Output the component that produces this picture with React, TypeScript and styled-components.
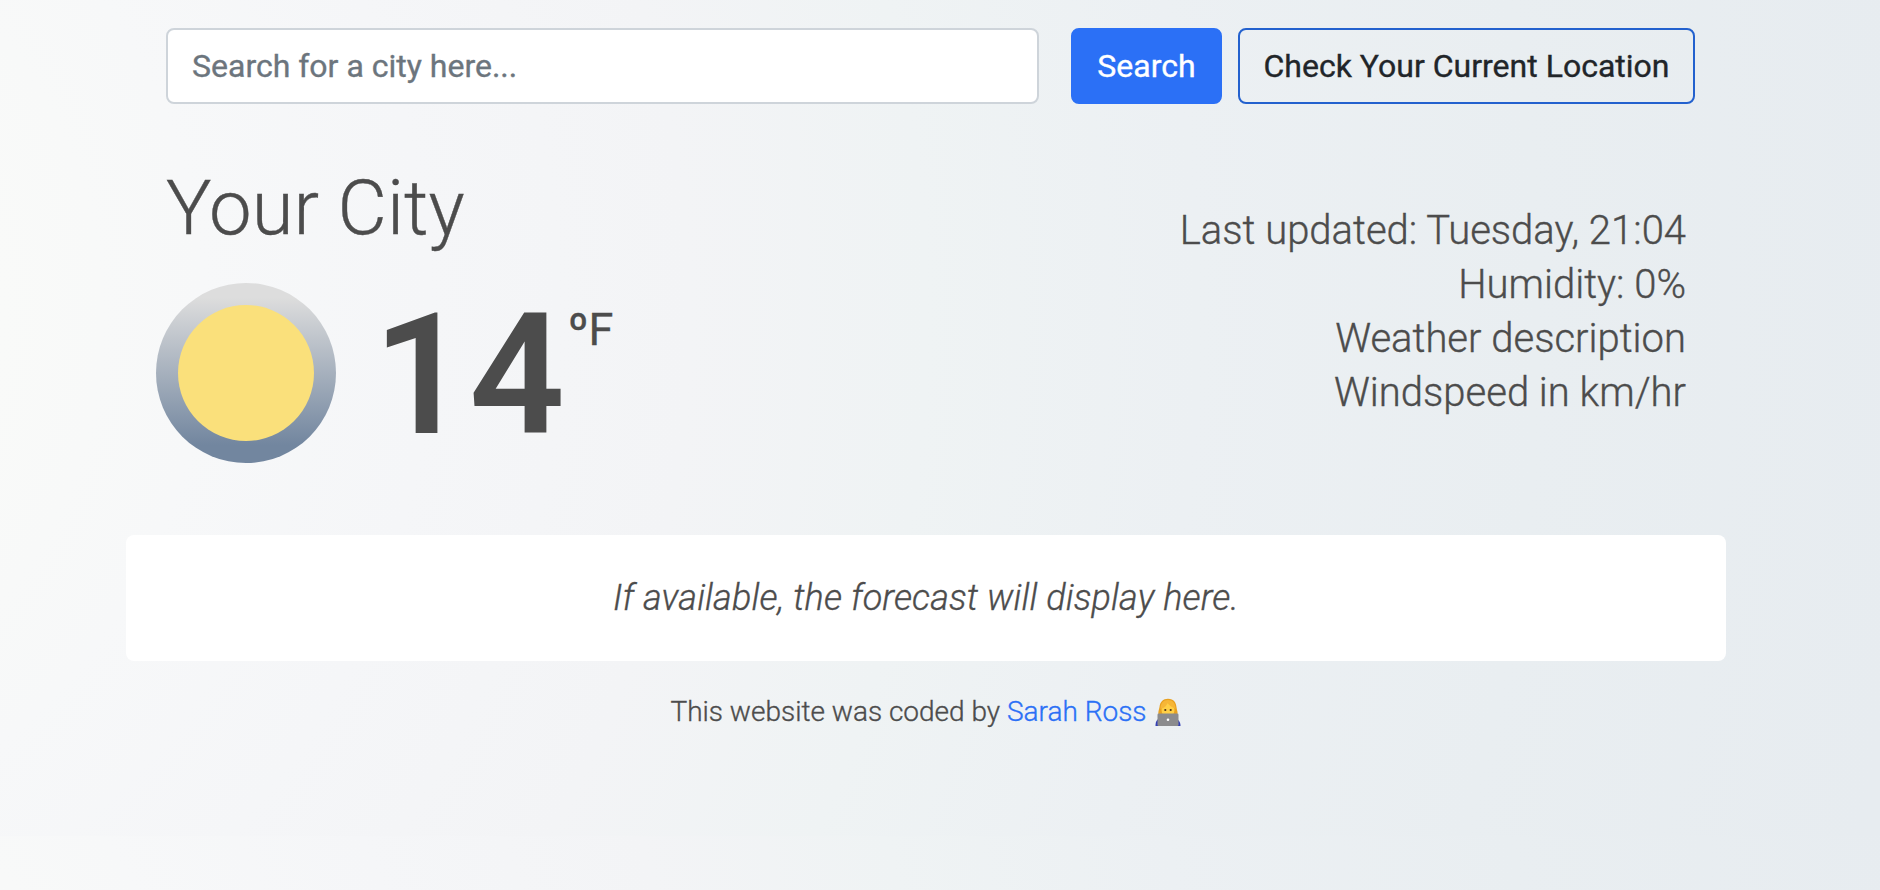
import React from "react";
import styled, { createGlobalStyle } from "styled-components";

const GlobalStyle = createGlobalStyle`
  *, *::before, *::after { box-sizing: border-box; }
  html { min-height: 100%; }
  body {
    margin: 0;
    min-height: 836px;
    font-family: Roboto, "Liberation Sans", sans-serif;
    font-weight: 300;
    color: #4c4c4c;
    -webkit-text-stroke: 0.35px;
    background: radial-gradient(circle 2260px at -340px 38%, #f9faf9 15%, #f7f8f9 24%, #f5f6f8 34%, #f3f4f6 45.5%, #eff3f4 56%, #ecf0f3 68%, #e9eef1 83%, #e7ecf0 100%);
    background-size: 100% 836px;
  }
`;

const Container = styled.main`
  width: 1600px;
  margin-left: 126px;
  padding-top: 28px;
`;

const SearchForm = styled.form`
  display: flex;
  align-items: stretch;
  height: 76px;
  padding-left: 40px;
`;

const SearchInput = styled.input`
  width: 873px;
  margin-right: 32px;
  padding: 0 24px;
  border: 2px solid #ced4da;
  border-radius: 8px;
  background: #fff;
  font: 400 32px Roboto, "Liberation Sans", sans-serif;
  color: #212529;
  &::placeholder { color: #6c757d; opacity: 1; }
`;

const Button = styled.button<{ $primary?: boolean; $width: number }>`
  width: ${(p) => p.$width}px;
  margin-right: 16px;
  padding: 0;
  border: 2px solid ${(p) => (p.$primary ? "#2b70f6" : "#2361ce")};
  border-radius: 8px;
  background: ${(p) => (p.$primary ? "#2b70f6" : "transparent")};
  color: ${(p) => (p.$primary ? "#fff" : "#212529")};
  font: 400 32px Roboto, "Liberation Sans", sans-serif;
  white-space: nowrap;
`;

const Overview = styled.section`
  display: flex;
  justify-content: space-between;
  height: 431px;
  padding: 59px 40px 0;
`;

const City = styled.h1`
  margin: 0 0 29px;
  font-size: 76px;
  line-height: 91px;
  font-weight: 300;
`;

const Current = styled.div`
  display: flex;
  align-items: flex-start;
  margin-left: -10px;
`;

const WeatherIcon = styled.svg`
  width: 180px;
  height: 180px;
  flex: none;
`;

const Temperature = styled.strong`
  margin: 3px 0 0 37px;
  font-size: 168px;
  line-height: 180px;
  font-weight: 600;
  -webkit-text-stroke: 0;
`;

const Unit = styled.span`
  margin: 18px 0 0 3px;
  font-size: 45px;
  line-height: 58px;
  font-weight: 400;
`;

const Degree = styled.span`
  font-weight: 500;
`;

const Details = styled.ul`
  list-style: none;
  margin: 41px 0 0;
  padding: 0;
  font-size: 40px;
  line-height: 54px;
  text-align: right;
`;

const Forecast = styled.section`
  display: flex;
  justify-content: center;
  height: 126px;
  border-radius: 8px;
  background: #fff;
  font-size: 36px;
  line-height: 127px;
  letter-spacing: 0.13px;
  font-style: italic;
`;

const Footer = styled.footer`
  display: flex;
  justify-content: center;
  align-items: center;
  padding-top: 30px;
  font-size: 28px;
  line-height: 42px;
  white-space: pre;
`;

const Link = styled.a`
  color: #2b70f6;
  text-decoration: none;
`;

const Coder = styled.svg`
  width: 28px;
  height: 28px;
  margin-left: 7px;
`;

const details = [
  "Last updated: Tuesday, 21:04",
  "Humidity: 0%",
  "Weather description",
  "Windspeed in km/hr",
];

export default function App() {
  return (
    <>
      <GlobalStyle />
      <Container>
        <SearchForm onSubmit={(e) => e.preventDefault()}>
          <SearchInput placeholder="Search for a city here..." />
          <Button type="submit" $primary $width={151}>Search</Button>
          <Button type="button" $width={457}>Check Your Current Location</Button>
        </SearchForm>
        <Overview>
          <div>
            <City>Your City</City>
            <Current>
              <WeatherIcon viewBox="0 0 180 180" aria-label="Clear sky">
                <defs>
                  <linearGradient id="sky" x1="0" y1="0" x2="0" y2="1">
                    <stop offset="0.08" stopColor="#dddddd" />
                    <stop offset="0.9" stopColor="#72869f" />
                  </linearGradient>
                </defs>
                <circle cx="90" cy="90" r="90" fill="url(#sky)" />
                <circle cx="90" cy="90" r="68" fill="#fae07b" />
              </WeatherIcon>
              <Temperature>14</Temperature>
              <Unit><Degree>º</Degree>F</Unit>
            </Current>
          </div>
          <Details>
            {details.map((d) => <li key={d}>{d}</li>)}
          </Details>
        </Overview>
        <Forecast>If available, the forecast will display here.</Forecast>
        <Footer>
          <span>This website was coded by <Link href="#">Sarah Ross</Link></span>
          <Coder viewBox="0 0 28 28" aria-label="Technologist">
            <path d="M1.500 28c0-4 1-7 5-8h14c4 1 6 4 6 8z" fill="#3440b4" />
            <path d="M5 17C3.500 15 5 12 5.500 9 6 4 9 .8 14 .8c6 0 8 4 8.500 8.500.3 3 2 5.500.5 7.700z" fill="#e8a01f" />
            <ellipse cx="14" cy="12" rx="6.500" ry="7" fill="#ffcf45" />
            <path d="M6.500 11c4-1 6-3 7-6 2 3 5 4.500 8 6 0-6-3-9-7.500-9s-7.500 3-7.500 9z" fill="#f6b637" />
            <circle cx="11.300" cy="12" r="1.100" fill="#4b3218" />
            <circle cx="16.700" cy="12" r="1.100" fill="#4b3218" />
            <rect x="3.500" y="15.500" width="21" height="12.500" rx="1.200" fill="#8b8b8d" />
            <circle cx="14" cy="21.800" r="1.300" fill="#fff" />
          </Coder>
        </Footer>
      </Container>
    </>
  );
}
